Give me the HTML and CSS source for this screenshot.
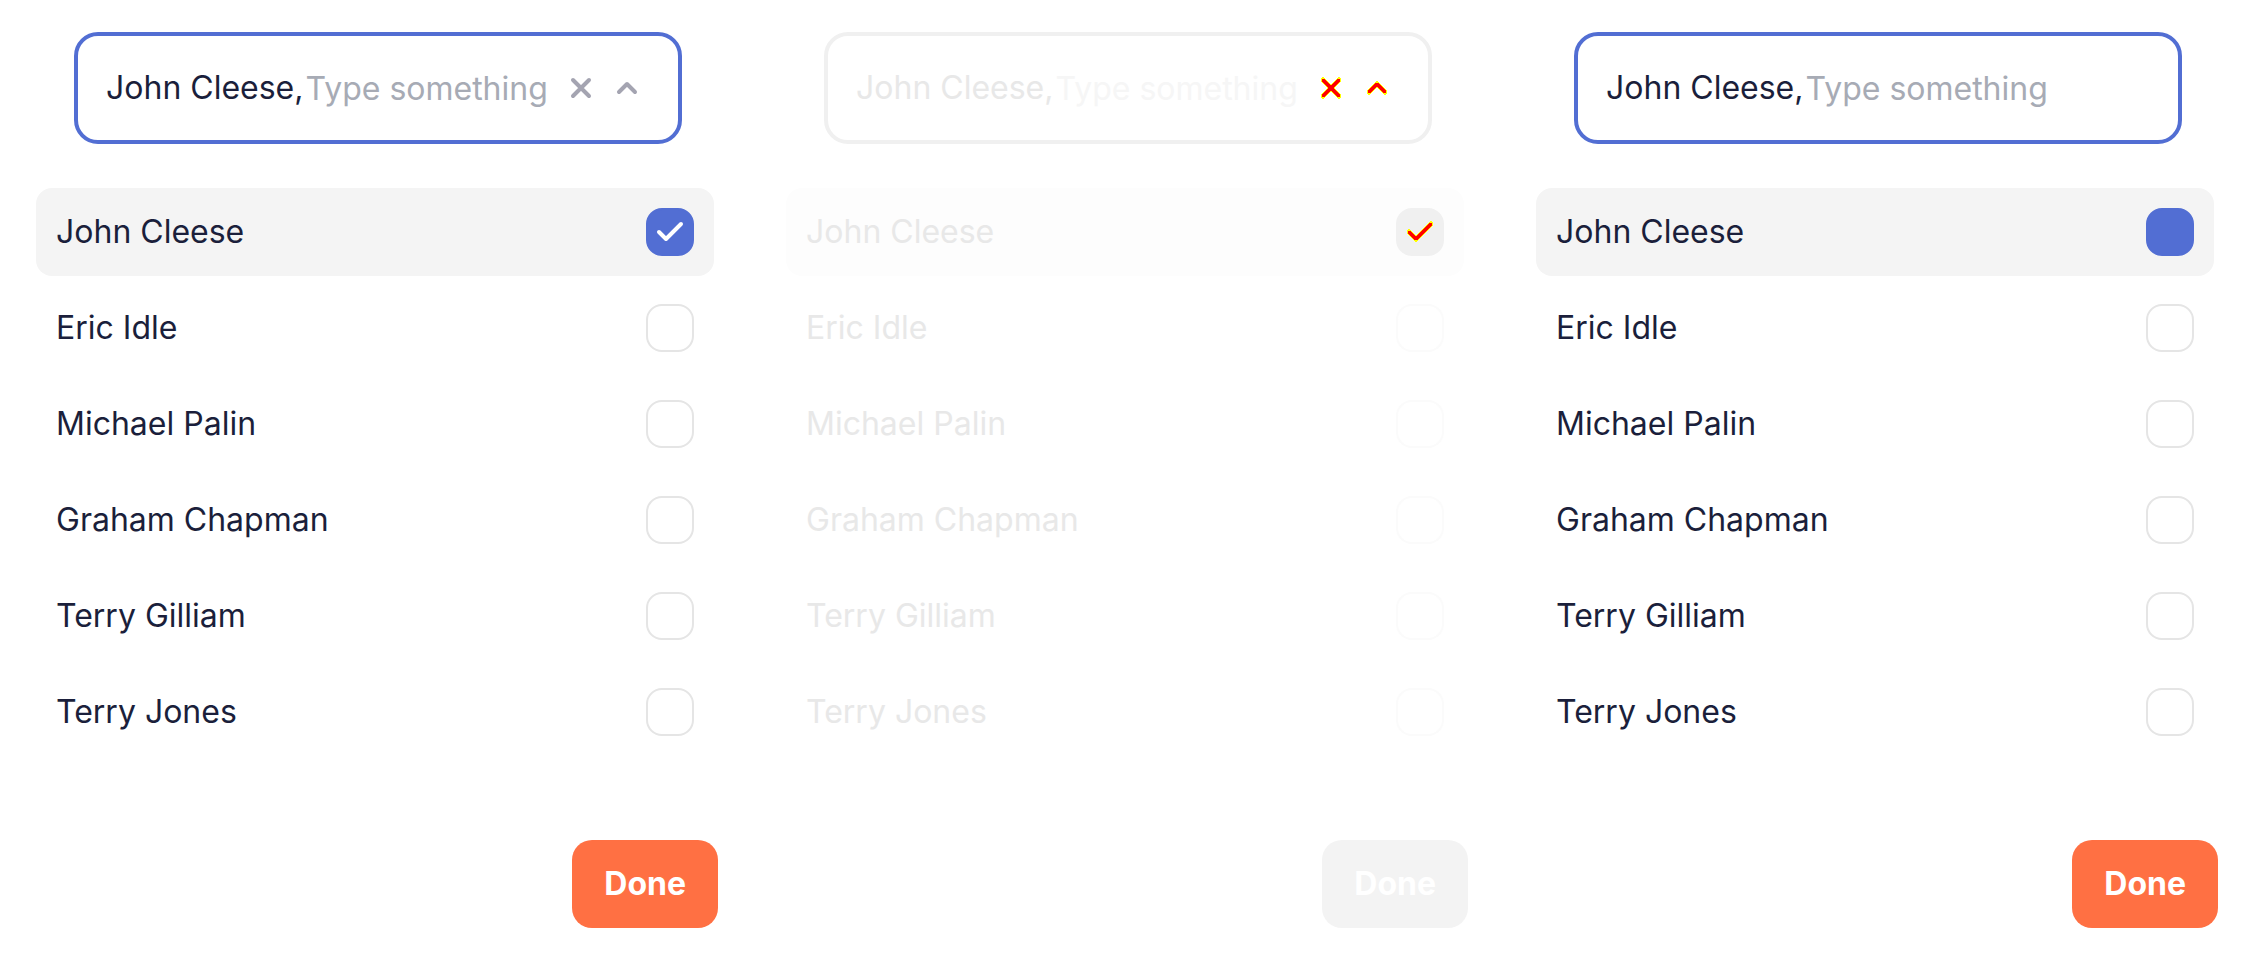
FILE: index.html
```
<!DOCTYPE html>
<html lang="en">
<head>
<meta charset="utf-8">
<title>Multi-select</title>
<link rel="stylesheet" href="styles.css">
</head>
<body>
<main class="panels"></main>

<template id="panel">
  <form class="panel">
    <div class="field">
      <label class="chosen">John Cleese,</label>
      <input class="query" type="text" placeholder="Type something">
      <button class="icon-button" type="button" aria-label="Clear">
        <svg class="icon" viewBox="0 0 24 24"><path class="halo" d="M4 4 20 20M20 4 4 20"/><path class="line" d="M4 4 20 20M20 4 4 20"/></svg>
      </button>
      <button class="icon-button" type="button" aria-label="Close list">
        <svg class="icon" viewBox="0 0 24 24"><path class="halo" d="M4 16 12 8 20 16"/><path class="line" d="M4 16 12 8 20 16"/></svg>
      </button>
    </div>
    <div class="options"></div>
    <button class="done" type="button">Done</button>
  </form>
</template>

<template id="option">
  <label class="option">
    <span class="name"></span>
    <span class="check">
      <input class="box" type="checkbox">
      <svg class="tick" viewBox="0 0 48 48"><path class="halo" d="M13 24 20 31 35 16"/><path class="line" d="M13 24 20 31 35 16"/></svg>
    </span>
  </label>
</template>

<script src="app.js"></script>
</body>
</html>
```
FILE: styles.css
```
* {
  box-sizing: border-box;
}

body {
  margin: 0;
  background: #fff;
  color: #1b1f3b;
  font-family: Inter, "Liberation Sans", sans-serif;
  font-size: 32px;
  line-height: 40px;
}

button,
input {
  margin: 0;
  border: 0;
  padding: 0;
  font: inherit;
}

.panels {
  display: grid;
  grid-template-columns: repeat(3, minmax(0, 1fr));
}

.panel {
  --accent: #526ed3;
  --text: #1b1f3b;
  --hint: #a7abb5;
  --row: #f4f4f4;
  --outline: #e5e5e5;
  --action: #ff7043;
  --icon: #a4a4b1;
  --tick: #fff;
  display: flex;
  flex-direction: column;
  padding: 32px 36px;
  color: var(--text);
}

.faded {
  --accent: #f0f0f0;
  --text: #e8e8e8;
  --hint: #f6f6f6;
  --row: #fdfdfd;
  --outline: #fbfbfb;
  --action: #f3f3f3;
  --icon: #f00;
  --tick: #f00;
}

.field {
  display: flex;
  align-items: center;
  height: 112px;
  margin: 0 32px 44px 38px;
  border: 4px solid var(--accent);
  border-radius: 24px;
  padding: 0 28px;
}

.chosen {
  flex: none;
  margin-right: 2px;
}

.query {
  flex: 1;
  min-width: 0;
  height: 48px;
  background: none;
  color: inherit;
  outline: 0;
}

.query::placeholder {
  color: var(--hint);
  opacity: 1;
}

.icon-button {
  display: grid;
  flex: none;
  width: 46px;
  height: 48px;
  place-items: center;
  background: none;
}

.icon {
  width: 24px;
  height: 24px;
}

.line,
.halo {
  fill: none;
  stroke-linecap: round;
  stroke-linejoin: round;
}

.line {
  stroke: var(--icon);
  stroke-width: 4px;
}

.halo {
  stroke: none;
}

.tick .line {
  stroke: var(--tick);
}

.faded .line,
.faded .halo {
  shape-rendering: crispEdges;
}

.faded .halo {
  stroke: #ff0;
  stroke-width: 5px;
}

.faded .line {
  stroke-width: 3px;
}

.plain .icon,
.plain .tick {
  visibility: hidden;
}

.options {
  display: flex;
  flex-direction: column;
  gap: 8px;
}

.option {
  display: flex;
  align-items: center;
  justify-content: space-between;
  height: 88px;
  border-radius: 16px;
  padding: 0 20px;
}

.option:has(:checked) {
  background: var(--row);
}

.check {
  display: grid;
}

.box,
.tick {
  grid-area: 1 / 1;
  width: 48px;
  height: 48px;
}

.box {
  appearance: none;
  border: 2px solid var(--outline);
  border-radius: 16px;
}

.box:checked {
  border-color: var(--accent);
  background: var(--accent);
}

.tick {
  pointer-events: none;
}

.box:not(:checked) + .tick {
  display: none;
}

.done {
  align-self: flex-end;
  height: 88px;
  margin: 84px -4px 0 0;
  border-radius: 20px;
  padding: 0 32px;
  background: var(--action);
  color: #fff;
  font-weight: 700;
}
```
FILE: app.js
```
const names = ["John Cleese", "Eric Idle", "Michael Palin", "Graham Chapman", "Terry Gilliam", "Terry Jones"];
const variants = ["normal", "faded", "plain"];
const panelTemplate = document.getElementById("panel");
const optionTemplate = document.getElementById("option");

for (const variant of variants) {
  const panel = panelTemplate.content.cloneNode(true);
  const query = panel.querySelector(".query");
  query.id = "query-" + variant;
  panel.querySelector(".chosen").htmlFor = query.id;
  panel.querySelector(".panel").classList.add(variant);
  for (const name of names) {
    const option = optionTemplate.content.cloneNode(true);
    option.querySelector(".name").textContent = name;
    option.querySelector(".box").checked = name === names[0];
    panel.querySelector(".options").append(option);
  }
  document.querySelector(".panels").append(panel);
}
```
